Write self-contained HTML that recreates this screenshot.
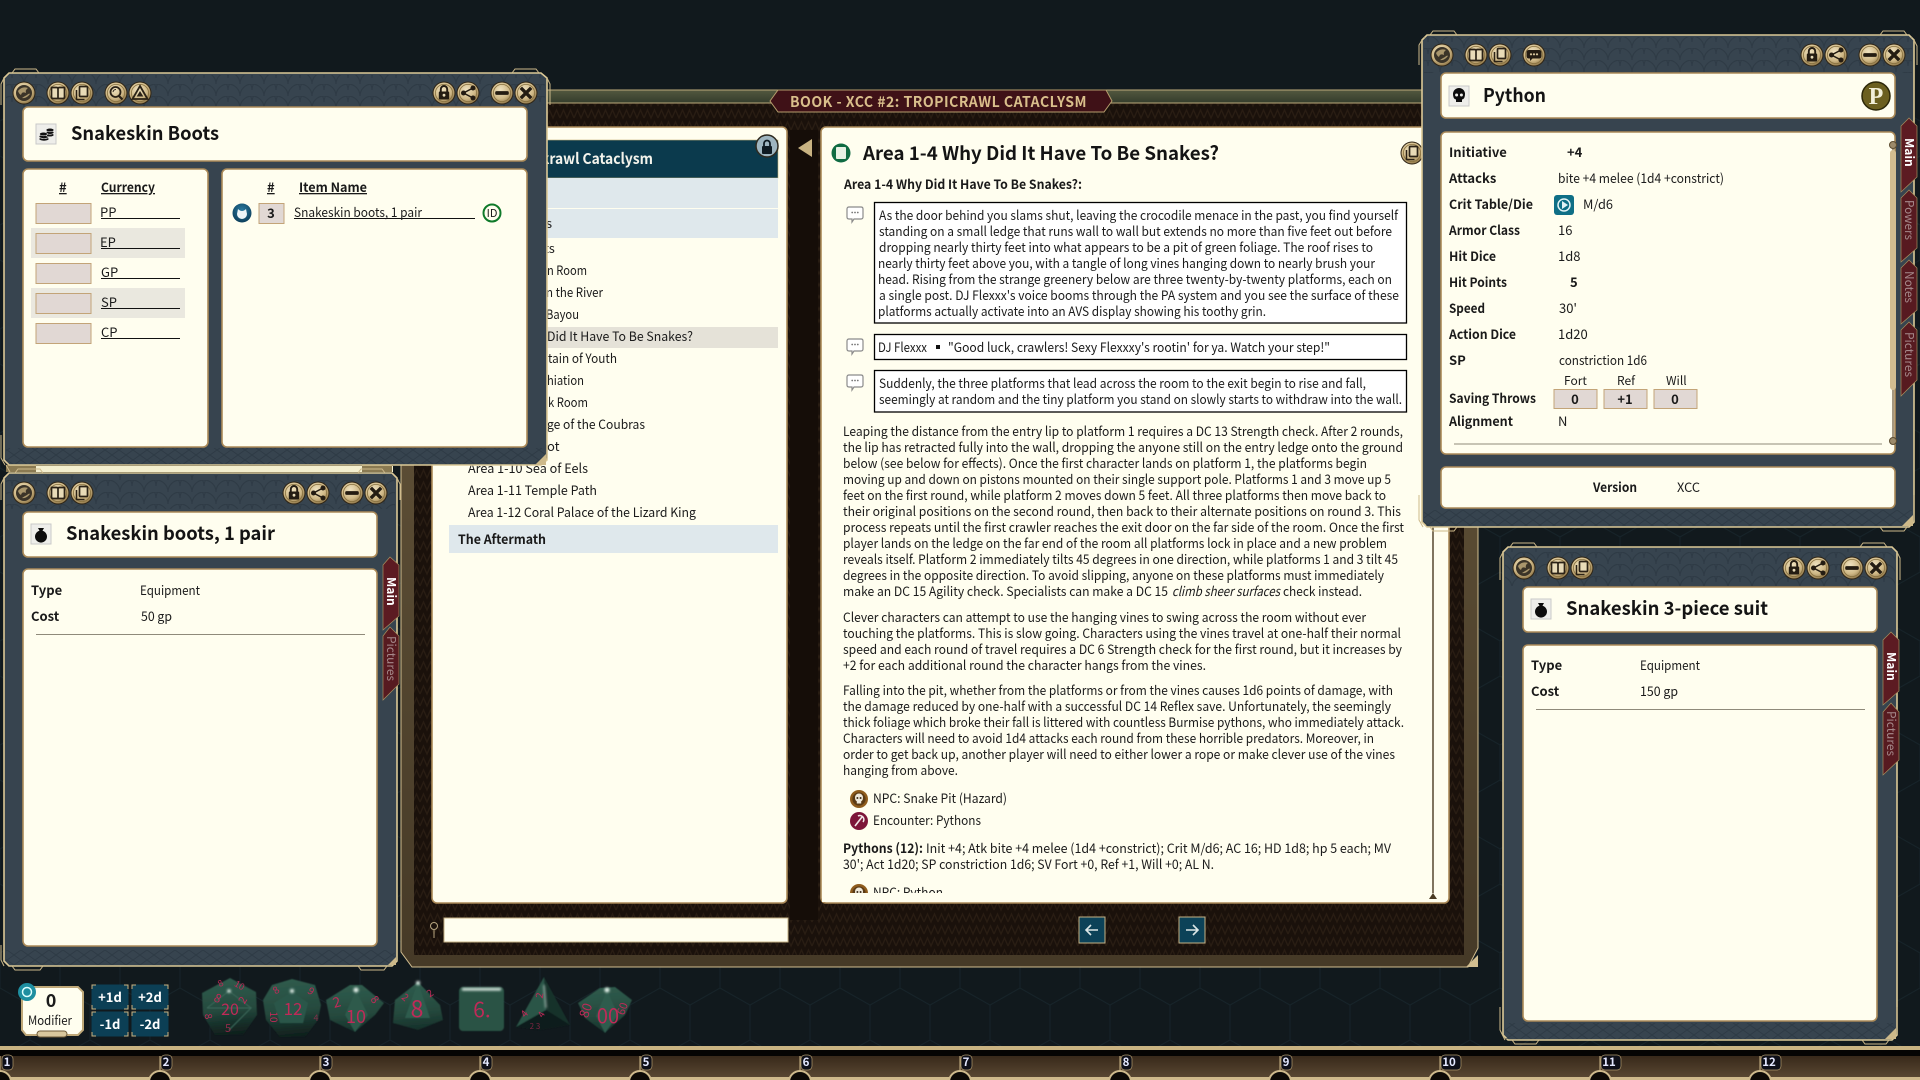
<!DOCTYPE html>
<html><head><meta charset="utf-8"><title>Book</title>
<style>
html,body{margin:0;padding:0;background:#11191d;overflow:hidden}
svg{display:block}
text{font-family:"Noto Sans CJK JP","Liberation Sans",sans-serif;fill:#1b1b1b;font-size:13px}
.h{font-weight:700;font-size:19px;fill:#141414}
.l{font-weight:700;font-size:13px;fill:#1a1a1a}
.t{font-weight:500;font-size:12px;fill:#fff}
.o{font-weight:400;font-size:12px;fill:#a68a8c}
.d{font-size:15px;fill:#c02a58}
.n{font-weight:700;font-size:11.5px;fill:#e4e8ff;text-anchor:middle}
.p{fill:#fffeef;stroke:#ab8a58;stroke-width:1.6}
.f{fill:#37444f;stroke:#dcc997;stroke-width:1.6}
.g{fill:none;stroke:#cdb98a;stroke-width:1}
.i{fill:#e1d8d4;stroke:#c3a478;stroke-width:1}
.u{fill:#fff;stroke:#000;stroke-width:1.3}
.m{fill:#0c3f55;stroke:#0c3f55}
</style></head><body>
<svg width="1920" height="1080" viewBox="0 0 1920 1080" xmlns="http://www.w3.org/2000/svg">
<defs>
<pattern id="hex" width="60" height="104" patternUnits="userSpaceOnUse"><path d="M30 0L60 17V52L30 69L0 52V17ZM30 69V104" fill="none" stroke="#17242a" stroke-width="1"/></pattern>
<pattern id="zig" width="14" height="12" patternUnits="userSpaceOnUse"><path d="M0 10L3.5 2L7 10L10.5 2L14 10" fill="none" stroke="#291d13" stroke-width="1.300"/></pattern>
<pattern id="scale" width="24" height="12" patternUnits="userSpaceOnUse"><path d="M0 12A12 12 0 0 1 24 12M-12 6A12 12 0 0 1 12 6M12 6A12 12 0 0 1 36 6" fill="none" stroke="#2b3742" stroke-width="1.2"/></pattern>
<pattern id="dia" width="14" height="10" patternUnits="userSpaceOnUse"><path d="M0 5L7 0L14 5L7 10Z" fill="none" stroke="#2c3843" stroke-width="1"/></pattern>
<linearGradient id="band" x1="0" y1="0" x2="0" y2="1"><stop offset="0" stop-color="#53583f"/><stop offset="1" stop-color="#343d2c"/></linearGradient>
<linearGradient id="olive" x1="0" y1="0" x2="0" y2="1"><stop offset="0" stop-color="#6a5a3e"/><stop offset="1" stop-color="#463a27"/></linearGradient>
<linearGradient id="dg" x1="0.4" y1="0" x2="0.5" y2="1"><stop offset="0" stop-color="#2f5c4d"/><stop offset="0.6" stop-color="#264a3e"/><stop offset="1" stop-color="#15302a"/></linearGradient>
<linearGradient id="dd" x1="0.4" y1="0" x2="0.5" y2="1"><stop offset="0" stop-color="#2f5c4d"/><stop offset="0.55" stop-color="#264a3e"/><stop offset="0.8" stop-color="#16302a"/><stop offset="1" stop-color="#101f1c"/></linearGradient>
<linearGradient id="brownbar" x1="0" y1="0" x2="0" y2="1"><stop offset="0" stop-color="#38291a"/><stop offset="1" stop-color="#5a4833"/></linearGradient>
<radialGradient id="gold" cx="0.42" cy="0.35" r="0.7"><stop offset="0" stop-color="#efe2c0"/><stop offset="0.6" stop-color="#d0b987"/><stop offset="1" stop-color="#8c7345"/></radialGradient>
<radialGradient id="blue" cx="0.5" cy="0.35" r="0.7"><stop offset="0" stop-color="#2b7aa0"/><stop offset="1" stop-color="#0a3a55"/></radialGradient>
<filter id="bl" x="-5%" y="-5%" width="110%" height="110%"><feGaussianBlur stdDeviation="0.5"/></filter>
<filter id="gl" x="-100%" y="-100%" width="300%" height="300%"><feGaussianBlur stdDeviation="1.2"/></filter>
<g id="b"><circle r="11.5" fill="#2f2516"/><circle r="10.5" fill="url(#gold)"/><circle r="8.6" fill="none" stroke="#87703f" stroke-width="0.8"/></g>
<g id="bg"><circle r="11.5" fill="#2f2516"/><circle r="10.5" fill="url(#gold)"/><circle r="8" fill="#3b3428"/><path d="M-6 -2Q-2 -7 4 -5Q1 -3 2 0Q-2 -2-3 2Q-5 1-6 -2ZM-2 5Q2 6 6 1Q5 0 3 2Q1 3-2 5Z" fill="#a9966c"/></g>
<g id="bk"><use href="#b"/><path d="M-6.5 -5.5h5q1.5 0 1.5 1.5v9.5h-5q-1.5 0-1.5-1.5zM6.5 -5.5h-5q-1.5 0-1.5 1.5v9.5h5q1.5 0 1.5-1.5z" fill="#e8dbb8" stroke="#2b2216" stroke-width="1.7"/></g>
<g id="cp"><use href="#b"/><path d="M-5.5 -3v9.5h8" fill="none" stroke="#2b2216" stroke-width="1.5"/><rect x="-2.5" y="-6.5" width="8" height="10" rx="1" fill="#e8dbb8" stroke="#2b2216" stroke-width="1.7"/></g>
<g id="sr"><use href="#b"/><circle cx="-.5" cy="-1" r="5" fill="none" stroke="#2b2216" stroke-width="1.8"/><path d="M3 3L6.5 6.5" stroke="#2b2216" stroke-width="2.2"/><path d="M-3 -1A3 3 0 0 1 0 -3.5" fill="none" stroke="#2b2216" stroke-width="1"/></g>
<g id="wa"><use href="#b"/><path d="M0 -7L7.5 6H-7.5Z" fill="none" stroke="#2b2216" stroke-width="1.8"/><path d="M0 -2L3.3 3.5H-3.3Z" fill="#2b2216"/></g>
<g id="lk"><use href="#b"/><rect x="-5.2" y="-1.5" width="10.4" height="8" rx="1" fill="#241c12"/><path d="M-3.2 -1.5v-2.3a3.2 3.2 0 0 1 6.4 0v2.3" fill="none" stroke="#241c12" stroke-width="1.9"/><circle cy="2.2" r="1.4" fill="#e8dbb8"/></g>
<g id="sh"><use href="#b"/><path d="M5 -5L-4.5 0L5 5" fill="none" stroke="#241c12" stroke-width="1.5"/><circle cx="-4.5" r="2.5" fill="#241c12"/><circle cx="5" cy="-5" r="2.5" fill="#241c12"/><circle cx="5" cy="5" r="2.5" fill="#241c12"/></g>
<g id="mn"><use href="#b"/><rect x="-6.8" y="-1.9" width="13.6" height="3.8" rx="1.4" fill="#241c12"/></g>
<g id="cl"><use href="#b"/><path d="M-5.2 -5.2L5.2 5.2M5.2 -5.2L-5.2 5.2" stroke="#241c12" stroke-width="3.4"/></g>
<g id="ch"><use href="#b"/><path d="M-5 -5H5Q7.5 -5 7.5 -2.5V1Q7.5 3.5 5 3.5H-1.5L-4 6V3.5H-5Q-7.5 3.5-7.5 1V-2.5Q-7.5 -5-5 -5Z" fill="#241c12"/><circle cx="-3" cy="-.7" r="1.1" fill="#d9c79d"/><circle cy="-.7" r="1.1" fill="#d9c79d"/><circle cx="3" cy="-.7" r="1.1" fill="#d9c79d"/></g>
<g id="bub"><path d="M-6 -7H6Q8 -7 8 -5V3Q8 5 6 5H-1L-3 8V5H-6Q-8 5-8 3V-5Q-8 -7-6 -7Z" fill="#fff" stroke="#8b8b8b" stroke-width="1.2"/><circle cx="-2.8" cy="-1.5" r=".9" fill="#777"/><circle cy="-1.5" r=".9" fill="#777"/><circle cx="2.8" cy="-1.5" r=".9" fill="#777"/></g>
<g id="ic"><rect x="-10" y="-10" width="20" height="20" fill="#eeeeea" stroke="#c9c9c9"/></g>
<g id="pouch"><use href="#ic"/><path d="M-3 -6L3 -6L1.5 -3.2A6 6 0 1 1-1.5 -3.2Z" fill="#0c0c0c"/></g>
<g id="skl"><use href="#ic"/><path d="M-6 -2A6 6 0 0 1 6 -2Q6 3 3 3.5V6H-3V3.5Q-6 3-6 -2Z" fill="#0c0c0c"/><circle cx="-2.4" cy="-1" r="1.5" fill="#eeeeea"/><circle cx="2.4" cy="-1" r="1.5" fill="#eeeeea"/></g>
<g id="npc"><circle r="9" fill="#8f5c1c"/><circle r="6.6" fill="#5a3a14"/><path d="M-4 -1.500A4 4 0 0 1 4 -1.500Q4 1.500 2.200 2.200V4.500H-2.200V2.200Q-4 1.500-4 -1.500Z" fill="#efe9da"/><circle cx="-1.600" cy="-1" r="1" fill="#3c2a18"/><circle cx="1.600" cy="-1" r="1" fill="#3c2a18"/></g>
</defs>

<!-- background -->
<rect width="1920" height="1080" fill="#11191d"/>
<rect y="90" width="1920" height="960" fill="url(#hex)"/>

<!-- bottom bar -->
<rect y="1046" width="1920" height="4" fill="#c9b382"/>
<rect y="1050" width="1920" height="8" fill="#050403"/>
<rect y="1056" width="1920" height="22" fill="url(#brownbar)"/>
<rect y="1077" width="1920" height="3" fill="#cfba8c"/>
<g fill="#0d0a06" stroke="#cfba8c" stroke-width="2"><circle cx="0" cy="1082" r="11"/><circle cx="160" cy="1082" r="11"/><circle cx="320" cy="1082" r="11"/><circle cx="480" cy="1082" r="11"/><circle cx="640" cy="1082" r="11"/><circle cx="800" cy="1082" r="11"/><circle cx="960" cy="1082" r="11"/><circle cx="1120" cy="1082" r="11"/><circle cx="1280" cy="1082" r="11"/><circle cx="1440" cy="1082" r="11"/><circle cx="1600" cy="1082" r="11"/><circle cx="1760" cy="1082" r="11"/></g>
<g stroke="#cfba8c" stroke-width="1"><path d="M0 1056V1072M160 1056V1072M320 1056V1072M480 1056V1072M640 1056V1072M800 1056V1072M960 1056V1072M1120 1056V1072M1280 1056V1072M1440 1056V1072M1600 1056V1072M1760 1056V1072"/></g>
<g fill="#0e0f18" stroke="#b09a6c" stroke-width=".7"><rect x="2" y="1055" width="11" height="15" rx="4"/><rect x="161" y="1055" width="11" height="15" rx="4"/><rect x="321" y="1055" width="11" height="15" rx="4"/><rect x="481" y="1055" width="11" height="15" rx="4"/><rect x="641" y="1055" width="11" height="15" rx="4"/><rect x="801" y="1055" width="11" height="15" rx="4"/><rect x="961" y="1055" width="11" height="15" rx="4"/><rect x="1121" y="1055" width="11" height="15" rx="4"/><rect x="1281" y="1055" width="11" height="15" rx="4"/><rect x="1441" y="1055" width="20" height="15" rx="4"/><rect x="1601" y="1055" width="20" height="15" rx="4"/><rect x="1761" y="1055" width="20" height="15" rx="4"/></g>
<g><text class="n" x="7" y="1066">1</text><text class="n" x="166" y="1066">2</text><text class="n" x="326" y="1066">3</text><text class="n" x="486" y="1066">4</text><text class="n" x="646" y="1066">5</text><text class="n" x="806" y="1066">6</text><text class="n" x="966" y="1066">7</text><text class="n" x="1126" y="1066">8</text><text class="n" x="1286" y="1066">9</text><text class="n" x="1449" y="1066">10</text><text class="n" x="1609" y="1066">11</text><text class="n" x="1769" y="1066">12</text></g>

<!-- modifier -->
<path d="M26 987H78L83 992V1030L78 1035H26L22 1030V992Z" fill="#fffeef" stroke="#bfa878" stroke-width="2"/>
<rect x="37" y="1031" width="30" height="6" rx="3" fill="#d8c79c" stroke="#6d5a38"/>
<circle cx="27" cy="992" r="9" fill="#1e8ea0"/><circle cx="27" cy="992" r="4.5" fill="none" stroke="#dff" stroke-width="1.5"/>
<text x="51" y="1007" text-anchor="middle" style="font-size:18px;font-weight:700">0</text>
<text x="28" y="1025" textLength="44" lengthAdjust="spacingAndGlyphs" style="font-size:12.5px">Modifier</text>
<g>
<rect class="m" x="92" y="985" width="36" height="24"/><rect class="m" x="132" y="985" width="36" height="24"/><rect class="m" x="92" y="1012" width="36" height="24"/><rect class="m" x="132" y="1012" width="36" height="24"/>
<path d="M92 989V985H96M124 985H128V989M128 1005V1009H124M96 1009H92V1005M132 989V985H136M164 985H168V989M168 1005V1009H164M136 1009H132V1005M92 1016V1012H96M124 1012H128V1016M128 1032V1036H124M96 1036H92V1032M132 1016V1012H136M164 1012H168V1016M168 1032V1036H164M136 1036H132V1032" fill="none" stroke="#c9b382"/>
<text x="110" y="1002" text-anchor="middle" style="font-size:13px;font-weight:700;fill:#fff">+1d</text><text x="150" y="1002" text-anchor="middle" style="font-size:13px;font-weight:700;fill:#fff">+2d</text>
<text x="110" y="1029" text-anchor="middle" style="font-size:13px;font-weight:700;fill:#fff">-1d</text><text x="150" y="1029" text-anchor="middle" style="font-size:13px;font-weight:700;fill:#fff">-2d</text>
</g>

<!-- dice -->
<g filter="url(#bl)">
<path fill="url(#dd)" d="M230 978L256 992L257 1015L243 1035H215L203 1015L202 993Z"/>
<path fill="url(#dd)" d="M292 979L315 985L321 1005L318 1020L305 1037H280L266 1020L263 1000L272 985Z"/>
<path fill="#2c5749" d="M292 992L308 1003L303 1023H280L274 1003Z"/>
<path fill="url(#dg)" d="M350 985H362L384 1003L375 1015L355 1032L330 1020L326 1000Z"/>
<path fill="#2d5a4c" d="M356 990L345 1015L355 1032L368 1015Z"/>
<path fill="url(#dg)" d="M418 982L440 1005L443 1020L418 1030L393 1023L395 1000Z"/>
<path fill="#2f5c4e" d="M418 982L405 1018L430 1018Z"/>
<rect x="459" y="987" width="45" height="44" rx="4" fill="#2a5244"/>
<path fill="#18302a" d="M544 977L546 1010L570 1025Z"/>
<path fill="#0f1e1b" d="M516 1027L546 1010L570 1025L540 1030Z"/>
<path fill="#2a5547" d="M544 977L546 1010L516 1027Z"/>
<path fill="url(#dg)" d="M600 988L615 987L632 1000L625 1015L605 1033L585 1018L578 1003Z"/>
<path fill="#2e5b4d" d="M607 990L596 1016L605 1033L618 1015Z"/>
<path d="M229 991L207 1008M229 991L251 1008M207 1008H251L229 1030" fill="none" stroke="#3a6658"/>
</g>
<g filter="url(#gl)" fill="#e8f5ee"><circle cx="229" cy="991" r="1.800"/><circle cx="292" cy="991" r="2"/><circle cx="356" cy="990" r="2.500"/><circle cx="418" cy="983" r="2"/><rect x="462" y="988" width="39" height="2.500"/><circle cx="607" cy="990" r="2.500"/><path d="M544 985L546 1008" stroke="#e8f5ee"/></g>
<g text-anchor="middle">
<text class="d" x="230" y="1015" style="font-size:16px">20</text><text class="d" x="293" y="1015" style="font-size:17px">12</text><text class="d" x="356" y="1023" style="font-size:18px">10</text><text class="d" x="417" y="1017" style="font-size:23px">8</text><text class="d" x="482" y="1017" style="font-size:21px">6.</text><text class="d" x="608" y="1023" style="font-size:20px">00</text>
<text class="d" transform="translate(216 1002) rotate(25)" style="font-size:12px">8</text><text class="d" transform="translate(246 1002) rotate(-60)" style="font-size:11px">2</text><text class="d" transform="translate(222 986) rotate(-30)" style="font-size:9px">8</text><text class="d" transform="translate(238 988) rotate(30)" style="font-size:9px">10</text><text class="d" transform="translate(205 1017) rotate(80)" style="font-size:10px">8</text><text class="d" x="228" y="1032" style="font-size:11px;opacity:.7">5</text>
<text class="d" transform="translate(278 993) rotate(-35)" style="font-size:10px">8</text><text class="d" transform="translate(309 994) rotate(35)" style="font-size:10px">9</text><text class="d" transform="translate(270 1017) rotate(90)" style="font-size:10px">10</text><text class="d" x="316" y="1021" style="font-size:9px;opacity:.6">4</text>
<text class="d" transform="translate(338 1007) rotate(-15)" style="font-size:14px">2</text><text class="d" transform="translate(372 1002) rotate(50)" style="font-size:11px">8</text>
<text class="d" transform="translate(403 1000) rotate(40)" style="font-size:10px">2</text><text class="d" transform="translate(432 996) rotate(-35)" style="font-size:10px">2</text>
<text class="d" transform="translate(543 996) rotate(-80)" style="font-size:10px">2</text><text class="d" transform="translate(544 1016) rotate(-60)" style="font-size:9px">4</text><text class="d" transform="translate(527 1016) rotate(-50)" style="font-size:10px">4</text><text class="d" x="535" y="1029" style="font-size:8px;opacity:.6">2 3</text>
<text class="d" transform="translate(590 1012) rotate(-70)" style="font-size:13px">80</text><text class="d" transform="translate(626 1010) rotate(-70)" style="font-size:11px">60</text>
</g>

<!-- book window -->
<path d="M401 103H1478V948L1468 967H412L401 952Z" fill="url(#olive)" stroke="#d2be90" stroke-width="1"/>
<rect x="414" y="103" width="1050" height="852" fill="#1a110b"/>
<rect x="414" y="103" width="1050" height="852" fill="url(#zig)"/>
<rect x="790" y="130" width="28" height="790" fill="#150d08"/>
<rect x="414" y="90" width="1064" height="13" fill="url(#band)" stroke="#bdaa7b" stroke-width="1"/>
<path d="M770 101L778 90H1106L1112 101L1104 112H778Z" fill="#3f1117" stroke="#b59d6c"/>
<text x="790" y="107" textLength="297" lengthAdjust="spacingAndGlyphs" style="font-size:14.5px;font-weight:700;fill:#d9be8b;letter-spacing:.5px">BOOK - XCC #2: TROPICRAWL CATACLYSM</text>

<!-- list panel -->
<rect class="p" x="432" y="127" width="355" height="776" rx="5"/>
<rect x="449" y="140" width="329" height="38" fill="#0b3a4d" stroke="#c8b277" stroke-width=".6"/>
<text x="541" y="164" textLength="112" lengthAdjust="spacingAndGlyphs" style="font-size:15px;font-weight:700;fill:#f4f4ec">krawl Cataclysm</text>
<rect x="449" y="178" width="329" height="30" fill="#dfe8ec"/><rect x="449" y="209" width="329" height="29" fill="#dfe8ec"/>
<circle cx="767" cy="146" r="11" fill="#9eb5c0" stroke="#2e2a20" stroke-width="1.5"/><rect x="762" y="146" width="10" height="8" rx="1" fill="#0e1a22"/><path d="M764 146v-2.5a3 3 0 0 1 6 0v2.5" fill="none" stroke="#0e1a22" stroke-width="1.8"/>
<rect x="449" y="327" width="329" height="21" fill="#e5e2d8"/>
<rect x="449" y="525" width="329" height="28" fill="#dfe8ec"/>
<g>
<text x="546" y="228">s</text><text x="544" y="253">ts</text>
<text x="547" y="275" textLength="40" lengthAdjust="spacingAndGlyphs">n Room</text>
<text x="546" y="297" textLength="57" lengthAdjust="spacingAndGlyphs">n the River</text>
<text x="546" y="319" textLength="33" lengthAdjust="spacingAndGlyphs">Bayou</text>
<text x="547" y="341" textLength="146" lengthAdjust="spacingAndGlyphs">Did It Have To Be Snakes?</text>
<text x="548" y="363" textLength="69" lengthAdjust="spacingAndGlyphs">tain of Youth</text>
<text x="547" y="385" textLength="37" lengthAdjust="spacingAndGlyphs">hiation</text>
<text x="548" y="407" textLength="40" lengthAdjust="spacingAndGlyphs">k Room</text>
<text x="547" y="429" textLength="98" lengthAdjust="spacingAndGlyphs">ge of the Coubras</text>
<text x="547" y="451">ot</text>
<text x="468" y="473" textLength="120" lengthAdjust="spacingAndGlyphs">Area 1-10 Sea of Eels</text>
<text x="468" y="495" textLength="129" lengthAdjust="spacingAndGlyphs">Area 1-11 Temple Path</text>
<text x="468" y="517" textLength="228" lengthAdjust="spacingAndGlyphs">Area 1-12 Coral Palace of the Lizard King</text>
<text class="l" x="458" y="544" textLength="88" lengthAdjust="spacingAndGlyphs">The Aftermath</text>
</g>
<path d="M812 139V157L798 148Z" fill="#c9b382"/>

<!-- content panel -->
<rect class="p" x="821" y="127" width="628" height="776" rx="5"/>
<circle cx="841" cy="153" r="9.5" fill="#0f6b42"/><rect x="836" y="147" width="10" height="12" rx="1" fill="#e7f1e4"/>
<text x="863" y="160" textLength="356" lengthAdjust="spacingAndGlyphs" class="h">Area 1-4 Why Did It Have To Be Snakes?</text>
<text class="l" x="844" y="189" textLength="238" lengthAdjust="spacingAndGlyphs">Area 1-4 Why Did It Have To Be Snakes?:</text>
<use href="#bub" x="855" y="214"/><use href="#bub" x="855" y="346"/><use href="#bub" x="855" y="382"/>
<rect class="u" x="874.5" y="202.500" width="532" height="120.500"/>
<rect class="u" x="874.5" y="334.500" width="532" height="25"/>
<rect class="u" x="874.5" y="370.500" width="532" height="41.500"/>
<g>
<text x="879" y="220" textLength="519" lengthAdjust="spacingAndGlyphs">As the door behind you slams shut, leaving the crocodile menace in the past, you find yourself</text>
<text x="879" y="236" textLength="513" lengthAdjust="spacingAndGlyphs">standing on a small ledge that runs wall to wall but extends no more than five feet out before</text>
<text x="879" y="252" textLength="494" lengthAdjust="spacingAndGlyphs">dropping nearly thirty feet into what appears to be a pit of green foliage. The roof rises to</text>
<text x="878" y="268" textLength="497" lengthAdjust="spacingAndGlyphs">nearly thirty feet above you, with a tangle of long vines hanging down to nearly brush your</text>
<text x="878" y="284" textLength="514" lengthAdjust="spacingAndGlyphs">head. Rising from the strange greenery below are three twenty-by-twenty platforms, each on</text>
<text x="879" y="300" textLength="520" lengthAdjust="spacingAndGlyphs">a single post. DJ Flexxx's voice booms through the PA system and you see the surface of these</text>
<text x="878" y="316" textLength="388" lengthAdjust="spacingAndGlyphs">platforms actually activate into an AVS display showing his toothy grin.</text>
<text x="878" y="352" textLength="49" lengthAdjust="spacingAndGlyphs">DJ Flexxx</text>
<rect x="936" y="345" width="4" height="4" fill="#111"/>
<text x="948" y="352" textLength="382" lengthAdjust="spacingAndGlyphs">"Good luck, crawlers! Sexy Flexxxy's rootin' for ya. Watch your step!"</text>
<text x="879" y="388" textLength="487" lengthAdjust="spacingAndGlyphs">Suddenly, the three platforms that lead across the room to the exit begin to rise and fall,</text>
<text x="879" y="404" textLength="523" lengthAdjust="spacingAndGlyphs">seemingly at random and the tiny platform you stand on slowly starts to withdraw into the wall.</text>

<text x="843" y="436" textLength="560" lengthAdjust="spacingAndGlyphs">Leaping the distance from the entry lip to platform 1 requires a DC 13 Strength check. After 2 rounds,</text>
<text x="843" y="452" textLength="560" lengthAdjust="spacingAndGlyphs">the lip has retracted fully into the wall, dropping the anyone still on the entry ledge onto the ground</text>
<text x="843" y="468" textLength="524" lengthAdjust="spacingAndGlyphs">below (see below for effects). Once the first character lands on platform 1, the platforms begin</text>
<text x="843" y="484" textLength="548" lengthAdjust="spacingAndGlyphs">moving up and down on pistons mounted on their single support pole. Platforms 1 and 3 move up 5</text>
<text x="843" y="500" textLength="543" lengthAdjust="spacingAndGlyphs">feet on the first round, while platform 2 moves down 5 feet. All three platforms then move back to</text>
<text x="843" y="516" textLength="558" lengthAdjust="spacingAndGlyphs">their original positions on the second round, then back to their alternate positions on round 3. This</text>
<text x="843" y="532" textLength="561" lengthAdjust="spacingAndGlyphs">process repeats until the first crawler reaches the exit door on the far side of the room. Once the first</text>
<text x="843" y="548" textLength="544" lengthAdjust="spacingAndGlyphs">player lands on the ledge on the far end of the room all platforms lock in place and a new problem</text>
<text x="843" y="564" textLength="555" lengthAdjust="spacingAndGlyphs">reveals itself. Platform 2 immediately tilts 45 degrees in one direction, while platforms 1 and 3 tilt 45</text>
<text x="843" y="580" textLength="541" lengthAdjust="spacingAndGlyphs">degrees in the opposite direction. To avoid slipping, anyone on these platforms must immediately</text>
<text x="843" y="596" textLength="325" lengthAdjust="spacingAndGlyphs">make an DC 15 Agility check. Specialists can make a DC 15</text>
<text x="1172" y="596" textLength="108" lengthAdjust="spacingAndGlyphs" font-style="italic">climb sheer surfaces</text>
<text x="1283" y="596" textLength="79" lengthAdjust="spacingAndGlyphs">check instead.</text>

<text x="843" y="622" textLength="523" lengthAdjust="spacingAndGlyphs">Clever characters can attempt to use the hanging vines to swing across the room without ever</text>
<text x="843" y="638" textLength="558" lengthAdjust="spacingAndGlyphs">touching the platforms. This is slow going. Characters using the vines travel at one-half their normal</text>
<text x="843" y="654" textLength="559" lengthAdjust="spacingAndGlyphs">speed and each round of travel requires a DC 6 Strength check for the first round, but it increases by</text>
<text x="843" y="670" textLength="363" lengthAdjust="spacingAndGlyphs">+2 for each additional round the character hangs from the vines.</text>

<text x="843" y="695" textLength="550" lengthAdjust="spacingAndGlyphs">Falling into the pit, whether from the platforms or from the vines causes 1d6 points of damage, with</text>
<text x="843" y="711" textLength="548" lengthAdjust="spacingAndGlyphs">the damage reduced by one-half with a successful DC 14 Reflex save. Unfortunately, the seemingly</text>
<text x="843" y="727" textLength="561" lengthAdjust="spacingAndGlyphs">thick foliage which broke their fall is littered with countless Burmise pythons, who immediately attack.</text>
<text x="843" y="743" textLength="531" lengthAdjust="spacingAndGlyphs">Characters will need to avoid 1d4 attacks each round from these horrible predators. Moreover, in</text>
<text x="843" y="759" textLength="552" lengthAdjust="spacingAndGlyphs">order to get back up, another player will need to either lower a rope or make clever use of the vines</text>
<text x="843" y="775" textLength="115" lengthAdjust="spacingAndGlyphs">hanging from above.</text>

<use href="#npc" x="859" y="799"/>
<text x="873" y="803" textLength="134" lengthAdjust="spacingAndGlyphs">NPC: Snake Pit (Hazard)</text>
<circle cx="859" cy="821" r="9" fill="#7d1538"/><path d="M855 826L862 817M858 816A4 4 0 0 1 863 822" fill="none" stroke="#f1e6e6" stroke-width="1.6"/>
<text x="873" y="825" textLength="108" lengthAdjust="spacingAndGlyphs">Encounter: Pythons</text>
<text class="l" x="843" y="853" textLength="80" lengthAdjust="spacingAndGlyphs">Pythons (12):</text>
<text x="926" y="853" textLength="465" lengthAdjust="spacingAndGlyphs">Init +4; Atk bite +4 melee (1d4 +constrict); Crit M/d6; AC 16; HD 1d8; hp 5 each; MV</text>
<text x="843" y="869" textLength="371" lengthAdjust="spacingAndGlyphs">30'; Act 1d20; SP constriction 1d6; SV Fort +0, Ref +1, Will +0; AL N.</text>
</g>
<rect x="845" y="884" width="100" height="12" fill="#fffeef"/>
<use href="#npc" x="859" y="893"/><text x="873" y="897" textLength="70" lengthAdjust="spacingAndGlyphs">NPC: Python</text>
<rect x="822" y="893" width="610" height="9" fill="#fffeef"/>
<path d="M1433 520V893" stroke="#4a3a22" stroke-width="1.4"/><path d="M1429 899L1433 893L1437 899Z" fill="#4a3a22"/>
<use href="#cp" x="1412" y="153"/>

<!-- search and nav -->
<circle cx="434" cy="926" r="3.500" fill="none" stroke="#b5a47e"/><path d="M434 930V938" stroke="#b5a47e"/>
<rect x="444" y="918" width="344" height="24" fill="#fffeef" stroke="#c5b185"/>
<g fill="#0c4258" stroke="#c5b185" stroke-width="1"><rect x="1079" y="917" width="26" height="26"/><rect x="1179" y="917" width="26" height="26"/></g>
<path d="M1098 930H1086M1091 925L1086 930L1091 935M1186 930H1198M1193 925L1198 930L1193 935" fill="none" stroke="#dbe6e6" stroke-width="1.6"/>
<path d="M1466 967L1478 955V967Z" fill="#d2be90"/>

<!-- strip behind windows -->
<rect x="6" y="466" width="387" height="6" fill="#f4efcf"/>
<rect x="6" y="465" width="30" height="7" fill="#8a7a52"/><rect x="362" y="465" width="30" height="7" fill="#8a7a52"/>

<!-- window B: boots 1 pair -->
<g>
<path class="f" d="M4 478L9 473H392L397 478V961L392 966H9L4 961Z"/>
<rect x="6" y="475" width="389" height="34" fill="url(#scale)" opacity=".7"/>
<rect x="6" y="950" width="389" height="15" fill="url(#dia)" opacity=".8"/>
<path class="g" d="M1 500V484L4 478M15 473L18 469H40L43 473M358 473L361 469H382L385 473M397 478L400 484V500M1 945V960L4 966M12 966L15 970H40L43 966M358 966L361 970H384L387 966"/>
<path d="M388 965L396 957V965Z" fill="#cdb98a"/>
<rect class="p" x="23" y="512" width="354" height="45" rx="5"/>
<rect class="p" x="23" y="569" width="354" height="377" rx="5"/>
<use href="#pouch" x="41" y="534"/>
<text class="h" x="66" y="540" textLength="209" lengthAdjust="spacingAndGlyphs">Snakeskin boots, 1 pair</text>
<text class="l" x="31" y="595">Type</text><text x="140" y="595" textLength="60" lengthAdjust="spacingAndGlyphs">Equipment</text>
<text class="l" x="31" y="621">Cost</text><text x="141" y="621" textLength="31" lengthAdjust="spacingAndGlyphs">50 gp</text>
<path d="M36 634.500H365" stroke="#8f8a7a" stroke-width="1"/>
<path d="M383 565L390 557L399 565V616L383 630Z" fill="#5c1b22" stroke="#a8905e" stroke-width=".7"/>
<path d="M383 636L390 627L399 636V684L383 700Z" fill="#571a20" stroke="#a8905e" stroke-width=".7"/>
<text class="t" transform="translate(387 577) rotate(90)" style="font-weight:700">Main</text>
<text class="o" transform="translate(387 636) rotate(90)" textLength="45" lengthAdjust="spacingAndGlyphs">Pictures</text>
<use href="#bg" x="24" y="493"/><use href="#bk" x="58" y="493"/><use href="#cp" x="82" y="493"/><use href="#lk" x="294" y="493"/><use href="#sh" x="318" y="493"/><use href="#mn" x="352" y="493"/><use href="#cl" x="376" y="493"/>
</g>

<!-- window A: Snakeskin Boots -->
<g>
<path class="f" d="M4 78L9 73H541L547 78V460L541 465H9L4 460Z" stroke-width="2"/>
<rect x="6" y="75" width="539" height="32" fill="url(#scale)" opacity=".7"/>
<rect x="6" y="448" width="539" height="16" fill="url(#dia)" opacity=".8"/>
<path class="g" d="M1 105V84L4 78M12 73L15 69H36L39 73M512 73L515 69H536L539 73M547 78L550 84V105M1 435V458L5 465M6 465L10 472M547 445V458L542 465"/>
<path d="M535 465L546 454V465Z" fill="#cdb98a"/>
<rect class="p" x="23" y="107" width="504" height="54" rx="5"/>
<rect class="p" x="23" y="169" width="185" height="278" rx="5"/>
<rect class="p" x="222" y="169" width="305" height="278" rx="5"/>
<use href="#ic" x="46" y="134"/>
<g fill="#121212" stroke="#eeeeea" stroke-width=".6"><ellipse cx="44" cy="139" rx="5" ry="2"/><ellipse cx="44" cy="136.500" rx="5" ry="2"/><ellipse cx="50" cy="135" rx="4" ry="1.800"/><ellipse cx="50" cy="132.500" rx="4" ry="1.800"/><ellipse cx="50" cy="130" rx="4" ry="1.800"/><ellipse cx="43.500" cy="134" rx="4" ry="1.800"/></g>
<text class="h" x="71" y="140" textLength="148" lengthAdjust="spacingAndGlyphs">Snakeskin Boots</text>
<text class="l" x="59" y="192" text-decoration="underline">#</text>
<text class="l" x="101" y="192" textLength="54" lengthAdjust="spacingAndGlyphs" text-decoration="underline">Currency</text>
<text class="l" x="267" y="192" text-decoration="underline">#</text>
<text class="l" x="299" y="192" textLength="68" lengthAdjust="spacingAndGlyphs" text-decoration="underline">Item Name</text>
<rect x="31" y="228" width="154" height="30" fill="#eae8df"/><rect x="31" y="288" width="154" height="30" fill="#eae8df"/>
<rect class="i" x="36" y="203.500" width="55" height="20"/><rect class="i" x="36" y="233.500" width="55" height="20"/><rect class="i" x="36" y="263.500" width="55" height="20"/><rect class="i" x="36" y="293.500" width="55" height="20"/><rect class="i" x="36" y="323.500" width="55" height="20"/>
<text x="100" y="217">PP</text><text x="100" y="247">EP</text><text x="101" y="277">GP</text><text x="101" y="307">SP</text><text x="101" y="337">CP</text>
<path d="M101 218.500H180M101 248.500H180M101 278.500H180M101 308.500H180M101 338.500H180M294 218.500H475" stroke="#111" stroke-width="1"/>
<circle cx="242" cy="213" r="9.500" fill="url(#blue)"/><path d="M238 209Q242 213 246 209L247 214A5 5 0 0 1 237 214Z" fill="#eef5f7"/>
<rect class="i" x="259" y="203.500" width="25" height="20"/>
<text x="271" y="218" text-anchor="middle" style="font-weight:700">3</text>
<text x="294" y="217" textLength="128" lengthAdjust="spacingAndGlyphs">Snakeskin boots, 1 pair</text>
<circle cx="492" cy="213" r="8.500" fill="#fffeef" stroke="#0f7a2a" stroke-width="2"/>
<text x="492" y="217" text-anchor="middle" style="font-size:11px">ID</text>
<use href="#bg" x="24" y="93"/><use href="#bk" x="58" y="93"/><use href="#cp" x="82" y="93"/><use href="#sr" x="116" y="93"/><use href="#wa" x="140" y="93"/><use href="#lk" x="444" y="93"/><use href="#sh" x="468" y="93"/><use href="#mn" x="502" y="93"/><use href="#cl" x="526" y="93"/>
</g>

<!-- window C: Python -->
<g>
<path class="f" d="M1422 40L1427 35H1909L1914 40V522L1909 527H1427L1422 522Z" stroke-width="2"/>
<rect x="1424" y="37" width="488" height="36" fill="url(#scale)" opacity=".7"/>
<rect x="1424" y="510" width="488" height="16" fill="url(#dia)" opacity=".8"/>
<path class="g" d="M1419 65V45L1422 40M1430 35L1433 31H1454L1457 35M1880 35L1883 31H1904L1907 35M1914 40L1917 46V65M1419 495V520L1423 527M1430 527L1433 531H1454L1457 527M1880 527L1883 531H1904L1907 527M1914 495V520"/>
<path d="M1902 526L1913 515V526Z" fill="#cdb98a"/>
<rect class="p" x="1441" y="73" width="454" height="45" rx="5"/>
<rect class="p" x="1441" y="132" width="454" height="322" rx="5"/>
<rect class="p" x="1441" y="467" width="454" height="41" rx="5"/>
<use href="#skl" x="1459" y="96"/>
<text class="h" x="1483" y="102" textLength="63" lengthAdjust="spacingAndGlyphs">Python</text>
<circle cx="1876" cy="96" r="14" fill="#6b5f1f" stroke="#2c2708" stroke-width="1.500"/>
<text x="1876" y="104" text-anchor="middle" style="font-family:'Liberation Serif',serif;font-size:24px;font-weight:700;fill:#f2efd8">P</text>
<g>
<text class="l" x="1449" y="157">Initiative</text><text class="l" x="1567" y="157">+4</text>
<text class="l" x="1449" y="183">Attacks</text><text x="1558" y="183" textLength="166" lengthAdjust="spacingAndGlyphs">bite +4 melee (1d4 +constrict)</text>
<text class="l" x="1449" y="209" textLength="84" lengthAdjust="spacingAndGlyphs">Crit Table/Die</text>
<rect x="1554" y="195" width="20" height="20" rx="3" fill="#0f6f86"/><circle cx="1564" cy="205" r="6" fill="none" stroke="#e2f3f5" stroke-width="1.500"/><path d="M1562 201L1568 205L1562 209Z" fill="#e2f3f5"/>
<text x="1583" y="209" textLength="30" lengthAdjust="spacingAndGlyphs">M/d6</text>
<text class="l" x="1449" y="235" textLength="71" lengthAdjust="spacingAndGlyphs">Armor Class</text><text x="1558" y="235">16</text>
<text class="l" x="1449" y="261" textLength="47" lengthAdjust="spacingAndGlyphs">Hit Dice</text><text x="1558" y="261">1d8</text>
<text class="l" x="1449" y="287" textLength="58" lengthAdjust="spacingAndGlyphs">Hit Points</text><text class="l" x="1570" y="287">5</text>
<text class="l" x="1449" y="313" textLength="36" lengthAdjust="spacingAndGlyphs">Speed</text><text x="1559" y="313">30'</text>
<text class="l" x="1449" y="339" textLength="67" lengthAdjust="spacingAndGlyphs">Action Dice</text><text x="1558" y="339">1d20</text>
<text class="l" x="1449" y="365">SP</text><text x="1559" y="365" textLength="88" lengthAdjust="spacingAndGlyphs">constriction 1d6</text>
<text x="1564" y="385" style="font-size:12px">Fort</text><text x="1617" y="385" style="font-size:12px">Ref</text><text x="1666" y="385" style="font-size:12px">Will</text>
<text class="l" x="1449" y="403" textLength="87" lengthAdjust="spacingAndGlyphs">Saving Throws</text>
<rect class="i" x="1554" y="389.500" width="43" height="19"/><rect class="i" x="1604" y="389.500" width="43" height="19"/><rect class="i" x="1654" y="389.500" width="43" height="19"/>
<text class="l" x="1575" y="404" text-anchor="middle">0</text><text class="l" x="1625" y="404" text-anchor="middle">+1</text><text class="l" x="1675" y="404" text-anchor="middle">0</text>
<text class="l" x="1449" y="426" textLength="64" lengthAdjust="spacingAndGlyphs">Alignment</text><text x="1558" y="426">N</text>
<text class="l" x="1593" y="492" textLength="44" lengthAdjust="spacingAndGlyphs">Version</text><text x="1677" y="492" textLength="23" lengthAdjust="spacingAndGlyphs">XCC</text>
</g>
<path d="M1454 444H1882" stroke="#8f8a7a"/>
<path d="M1893 148V440" stroke="#6a5536" stroke-width="1.200"/><rect x="1890" y="150" width="6" height="240" rx="3" fill="#d3bd90"/>
<circle cx="1893" cy="145" r="3.500" fill="#9c8a6a" stroke="#5c4c30"/><circle cx="1893" cy="441" r="3.500" fill="#9c8a6a" stroke="#5c4c30"/>
<path d="M1901 126L1909 118L1917 126V177L1901 192Z" fill="#5c1b22" stroke="#a8905e" stroke-width=".7"/>
<path d="M1901 198L1909 190L1917 198V248L1901 262Z" fill="#571a20" stroke="#a8905e" stroke-width=".7"/>
<path d="M1901 268L1909 260L1917 268V310L1901 324Z" fill="#571a20" stroke="#a8905e" stroke-width=".7"/>
<path d="M1901 330L1909 322L1917 330V380L1901 396Z" fill="#571a20" stroke="#a8905e" stroke-width=".7"/>
<text class="t" transform="translate(1905 138) rotate(90)" style="font-weight:700">Main</text>
<text class="o" transform="translate(1905 200) rotate(90)" textLength="40" lengthAdjust="spacingAndGlyphs">Powers</text>
<text class="o" transform="translate(1905 271) rotate(90)" textLength="32" lengthAdjust="spacingAndGlyphs">Notes</text>
<text class="o" transform="translate(1905 332) rotate(90)" textLength="45" lengthAdjust="spacingAndGlyphs">Pictures</text>
<use href="#bg" x="1442" y="55"/><use href="#bk" x="1476" y="55"/><use href="#cp" x="1500" y="55"/><use href="#ch" x="1534" y="55"/><use href="#lk" x="1812" y="55"/><use href="#sh" x="1836" y="55"/><use href="#mn" x="1870" y="55"/><use href="#cl" x="1894" y="55"/>
</g>

<!-- window D: 3-piece suit -->
<g>
<path class="f" d="M1503 552L1508 547H1892L1897 552V1035L1892 1040H1508L1503 1035Z" stroke-width="2"/>
<rect x="1505" y="549" width="390" height="37" fill="url(#scale)" opacity=".7"/>
<rect x="1505" y="1023" width="390" height="16" fill="url(#dia)" opacity=".8"/>
<path class="g" d="M1500 580V558L1503 552M1510 547L1513 543H1534L1537 547M1860 547L1863 543H1884L1887 547M1897 552L1900 558V580M1500 1007V1030L1505 1040M1512 1040L1515 1044H1536L1539 1040M1862 1040L1865 1044H1886L1889 1040M1897 1007V1030"/>
<path d="M1885 1039L1896 1028V1039Z" fill="#cdb98a"/>
<rect class="p" x="1523" y="587" width="354" height="45" rx="5"/>
<rect class="p" x="1523" y="645" width="354" height="376" rx="5"/>
<use href="#pouch" x="1541" y="609"/>
<text class="h" x="1566" y="615" textLength="202" lengthAdjust="spacingAndGlyphs">Snakeskin 3-piece suit</text>
<text class="l" x="1531" y="670">Type</text><text x="1640" y="670" textLength="60" lengthAdjust="spacingAndGlyphs">Equipment</text>
<text class="l" x="1531" y="696">Cost</text><text x="1640" y="696" textLength="38" lengthAdjust="spacingAndGlyphs">150 gp</text>
<path d="M1536 709.500H1865" stroke="#8f8a7a"/>
<path d="M1883 640L1891 632L1899 640V691L1883 705Z" fill="#5c1b22" stroke="#a8905e" stroke-width=".7"/>
<path d="M1883 712L1891 703L1899 712V760L1883 775Z" fill="#571a20" stroke="#a8905e" stroke-width=".7"/>
<text class="t" transform="translate(1887 652) rotate(90)" style="font-weight:700">Main</text>
<text class="o" transform="translate(1887 711) rotate(90)" textLength="45" lengthAdjust="spacingAndGlyphs">Pictures</text>
<use href="#bg" x="1524" y="568"/><use href="#bk" x="1558" y="568"/><use href="#cp" x="1582" y="568"/><use href="#lk" x="1794" y="568"/><use href="#sh" x="1818" y="568"/><use href="#mn" x="1852" y="568"/><use href="#cl" x="1876" y="568"/>
</g>
</svg>
</body></html>
